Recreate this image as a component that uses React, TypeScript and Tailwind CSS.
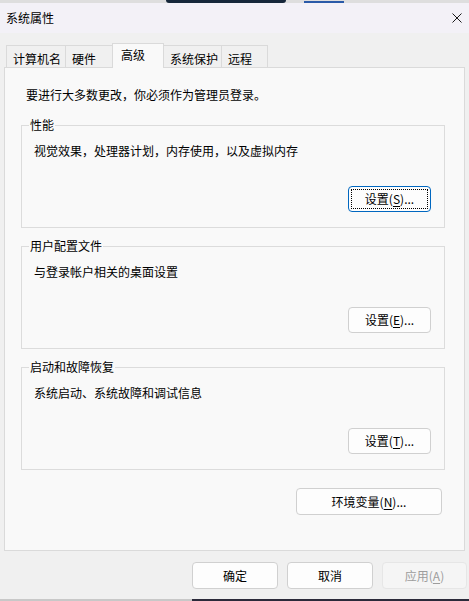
import React from 'react';

const font = { fontFamily: '"Noto Sans CJK SC", "Noto Sans", sans-serif' };

interface BtnProps {
  label: string;
  hotkey?: string;
  suffix?: string;
  width: string;
  height?: string;
  focused?: boolean;
  disabled?: boolean;
}

const DialogButton: React.FC<BtnProps> = ({ label, hotkey, suffix, width, height = 'h-[26px]', focused, disabled }) => {
  const base = `relative flex items-center justify-center rounded-[4px] text-[12px] leading-[16px] ${width} ${height}`;
  const look = disabled
    ? 'bg-[#f5f5f5] border border-[#e6e6e6] text-[#9d9d9d]'
    : focused
    ? 'bg-[#fdfdfd] border border-[#0067c0] text-black'
    : 'bg-[#fdfdfd] border border-[#d0d0d0] text-black';
  return (
    <div className={`${base} ${look}`}>
      {focused && <span className="absolute inset-[2px] border border-dotted border-black" />}
      <span>
        {label}
        {hotkey && (
          <>
            (<span className="underline underline-offset-2">{hotkey}</span>)
          </>
        )}
        {suffix}
      </span>
    </div>
  );
};

interface GroupProps {
  title: string;
  text: string;
  hotkey: string;
  focused?: boolean;
}

const GroupBox: React.FC<GroupProps> = ({ title, text, hotkey, focused }) => (
  <fieldset className="ml-[16px] w-[424px] h-[111px] border border-[#dcdcdc] p-0">
    <legend className="ml-[7px] px-[1px] text-[12px] leading-[16px] text-black">{title}</legend>
    <div className="pl-[12px] pr-[13px]">
      <div className="mt-[10px] text-[12px] leading-[16px] text-black">{text}</div>
      <div className="mt-[27px] flex justify-end">
        <DialogButton label="设置" hotkey={hotkey} suffix="..." width="w-[83px]" focused={focused} />
      </div>
    </div>
  </fieldset>
);

const tabs = [
  { name: '计算机名', w: 'w-[60px]' },
  { name: '硬件', w: 'w-[48px]' },
  { name: '高级', w: 'w-[52px]', active: true },
  { name: '系统保护', w: 'w-[59px]' },
  { name: '远程', w: 'w-[47px]' },
];

const App: React.FC = () => {
  return (
    <div className="w-[469px] h-[601px] overflow-hidden bg-[#f0f0f0] flex flex-col" style={font}>
      {/* desktop strip behind window */}
      <div className="h-[3px] bg-[#dedede] flex items-end overflow-hidden shrink-0">
        <div className="ml-[166px] w-[120px] h-[3px] bg-[#16273a] rounded-b-[3px]" />
        <div className="ml-[18px] w-[40px] h-[2px] bg-[#2a5aa8]" />
      </div>

      {/* title bar */}
      <div className="h-[30px] bg-[#f3f1f7] flex items-center justify-between pl-[6px] pr-[6px] shrink-0">
        <span className="text-[12px] leading-[16px] text-black">系统属性</span>
        <svg width="10" height="10" viewBox="0 0 10 10" className="mr-[1px]">
          <path d="M0.5 0.5 L9.5 9.5 M9.5 0.5 L0.5 9.5" stroke="#1a1a1a" strokeWidth="1" />
        </svg>
      </div>

      {/* tabs */}
      <div className="flex items-end pl-[6px] mt-[10px] h-[24px] shrink-0">
        {tabs.map((t, i) =>
          t.active ? (
            <div
              key={t.name}
              className={`${t.w} h-[25px] -mb-[1px] -ml-[1px] bg-[#f9f9f9] border border-b-0 border-[#dadada] text-[12px] leading-[16px] pl-[8px] pt-[3px] z-10`}
            >
              {t.name}
            </div>
          ) : (
            <div
              key={t.name}
              className={`${t.w} h-[22px] bg-[#f0f0f0] border border-b-0 border-[#dadada] ${i === 0 ? '' : '-ml-[1px]'} text-[12px] leading-[16px] pl-[6px] pt-[5px]`}
            >
              {t.name}
            </div>
          )
        )}
      </div>

      {/* panel */}
      <div className="ml-[4px] w-[461px] h-[484px] bg-[#f9f9f9] border border-[#dadada] flex flex-col shrink-0">
        <div className="mt-[19px] ml-[21px] text-[12px] leading-[16px] text-black">
          要进行大多数更改，你必须作为管理员登录。
        </div>
        <div className="mt-[14px] flex flex-col gap-[10px]">
          <GroupBox title="性能" text="视觉效果，处理器计划，内存使用，以及虚拟内存" hotkey="S" focused />
          <GroupBox title="用户配置文件" text="与登录帐户相关的桌面设置" hotkey="E" />
          <GroupBox title="启动和故障恢复" text="系统启动、系统故障和调试信息" hotkey="T" />
        </div>
        <div className="mt-[18px] flex justify-end pr-[22px]">
          <DialogButton label="环境变量" hotkey="N" suffix="..." width="w-[146px]" height="h-[27px]" />
        </div>
      </div>

      {/* footer buttons */}
      <div className="mt-[11px] flex gap-[9px] pl-[192px] shrink-0">
        <DialogButton label="确定" width="w-[86px]" height="h-[27px]" />
        <DialogButton label="取消" width="w-[86px]" height="h-[27px]" />
        <DialogButton label="应用" hotkey="A" width="w-[85px]" height="h-[27px]" disabled />
      </div>

      <div className="flex-1" />
      {/* desktop strip below window */}
      <div className="h-[2px] flex shrink-0">
        <div className="w-[192px] bg-[#c8c8c8]" />
        <div className="flex-1 bg-[#2b2a3a]" />
      </div>
    </div>
  );
};

export default App;
